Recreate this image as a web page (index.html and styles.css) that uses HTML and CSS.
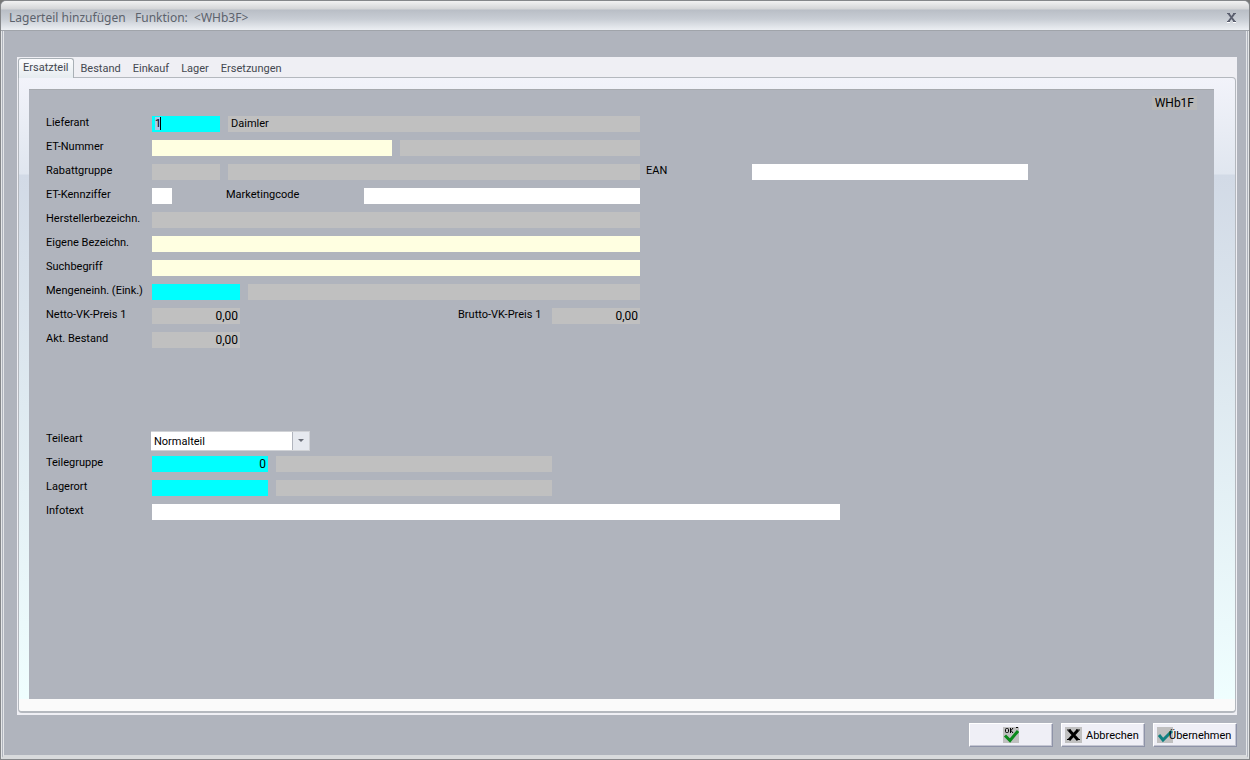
FILE: index.html
```html
<!DOCTYPE html>
<html lang="de">
<head>
    <meta charset="UTF-8">
    <meta name="viewport" content="width=device-width, initial-scale=1.0">
    <title>Lagerteil hinzufügen</title>
    <link rel="stylesheet" href="styles.css">
</head>
<body>
    <div class="fenster">
        <header class="titelleiste">
            <h1>Lagerteil hinzufügen &nbsp; Funktion: &nbsp;&lt;WHb3F&gt;</h1>
            <button type="button" class="schliessen" aria-label="Schließen">
                <svg width="11" height="11" viewBox="0 0 11 11">
                    <path d="M1 10.5h3M7 10.5h3" stroke="#fff"/>
                    <path d="M2.5 1.5l6 8M8.5 1.5l-6 8" stroke="#5c6070" stroke-width="2"/>
                    <path d="M1 1.5h3M7 1.5h3M1 9.5h3M7 9.5h3" stroke="#5c6070"/>
                </svg>
            </button>
        </header>

        <main class="inhalt">
            <div class="register">
                <nav class="reiter">
                    <button type="button" class="aktiv">Ersatzteil</button>
                    <button type="button">Bestand</button>
                    <button type="button">Einkauf</button>
                    <button type="button">Lager</button>
                    <button type="button">Ersetzungen</button>
                </nav>

                <div class="blatt">
                    <form id="ersatzteil" class="maske">
                        <div class="maskenkopf"><span class="code">WHb1F</span></div>

                        <!-- Stammdaten -->
                        <div class="zeile">
                            <label for="lieferant">Lieferant</label>
                            <input type="text" id="lieferant" class="schluessel markiert w-68" value="1">
                            <input type="text" class="anzeige w-412" value="Daimler" aria-label="Lieferantenname" readonly>
                        </div>
                        <div class="zeile">
                            <label for="etNummer">ET-Nummer</label>
                            <input type="text" id="etNummer" class="pflicht w-240">
                            <input type="text" class="anzeige w-240" aria-label="ET-Nummer Zusatz" readonly>
                        </div>
                        <div class="zeile">
                            <label for="rabattgruppe">Rabattgruppe</label>
                            <input type="text" id="rabattgruppe" class="anzeige w-68" readonly>
                            <input type="text" class="anzeige w-412" aria-label="Rabattgruppe Text" readonly>
                            <label for="ean" class="ean">EAN</label>
                            <input type="text" id="ean" class="w-276">
                        </div>
                        <div class="zeile">
                            <label for="kennziffer">ET-Kennziffer</label>
                            <input type="text" id="kennziffer" class="w-20">
                            <label for="marketingcode" class="marketing">Marketingcode</label>
                            <input type="text" id="marketingcode" class="w-276">
                        </div>
                        <div class="zeile">
                            <label for="hersteller">Herstellerbezeichn.</label>
                            <input type="text" id="hersteller" class="anzeige w-488" readonly>
                        </div>
                        <div class="zeile">
                            <label for="eigene">Eigene Bezeichn.</label>
                            <input type="text" id="eigene" class="pflicht w-488">
                        </div>
                        <div class="zeile">
                            <label for="suchbegriff">Suchbegriff</label>
                            <input type="text" id="suchbegriff" class="pflicht w-488">
                        </div>
                        <div class="zeile">
                            <label for="mengeneinheit">Mengeneinh. (Eink.)</label>
                            <input type="text" id="mengeneinheit" class="schluessel w-88">
                            <input type="text" class="anzeige w-392" aria-label="Mengeneinheit Text" readonly>
                        </div>
                        <div class="zeile">
                            <label for="netto">Netto-VK-Preis 1</label>
                            <input type="text" id="netto" class="anzeige zahl w-88" value="0,00" readonly>
                            <label for="brutto" class="brutto">Brutto-VK-Preis 1</label>
                            <input type="text" id="brutto" class="anzeige zahl w-88" value="0,00" readonly>
                        </div>
                        <div class="zeile">
                            <label for="bestand">Akt. Bestand</label>
                            <input type="text" id="bestand" class="anzeige zahl w-88" value="0,00" readonly>
                        </div>

                        <!-- Zuordnung -->
                        <div class="zeile abstand">
                            <label for="teileart">Teileart</label>
                            <div class="auswahl">
                                <select id="teileart">
                                    <option>Normalteil</option>
                                </select>
                            </div>
                        </div>
                        <div class="zeile">
                            <label for="teilegruppe">Teilegruppe</label>
                            <input type="text" id="teilegruppe" class="schluessel zahl w-116" value="0">
                            <input type="text" class="anzeige w-276" aria-label="Teilegruppe Text" readonly>
                        </div>
                        <div class="zeile">
                            <label for="lagerort">Lagerort</label>
                            <input type="text" id="lagerort" class="schluessel w-116">
                            <input type="text" class="anzeige w-276" aria-label="Lagerort Text" readonly>
                        </div>
                        <div class="zeile">
                            <label for="infotext">Infotext</label>
                            <input type="text" id="infotext" class="w-688">
                        </div>
                    </form>
                </div>
            </div>

            <footer class="knoepfe">
                <button type="submit" form="ersatzteil" class="ok">
                    <svg width="16" height="16" viewBox="0 0 16 16" role="img" aria-label="OK">
                        <rect width="16" height="16" fill="#c0c0c0"/>
                        <path d="M2 8.500l5 5L15 4" fill="none" stroke="#0a8a1a" stroke-width="3"/>
                        <rect x="2.500" y="1.500" width="3" height="4" rx="1" fill="none" stroke="#000"/>
                        <path d="M7.500 1v5M10 1L8 3.500 10 6M13 .500h2" fill="none" stroke="#000"/>
                    </svg>
                </button>
                <button type="button">
                    <svg width="17" height="16" viewBox="0 0 17 16">
                        <rect width="17" height="16" fill="#c0c0c0"/>
                        <path d="M4 3l9 10M13 3L4 13" stroke="#000" stroke-width="3"/>
                        <path d="M2 3h4M11 3h4M2 12.500h4M11 12.500h4" stroke="#000"/>
                    </svg>
                    <span>Abbrechen</span>
                </button>
                <button type="button" class="uebernehmen">
                    <svg width="16" height="16" viewBox="0 0 16 16">
                        <rect width="16" height="16" fill="#c0c0c0"/>
                        <path d="M2 8l4 5 9-9" fill="none" stroke="#108080" stroke-width="3"/>
                    </svg>
                    <span>Übernehmen</span>
                </button>
            </footer>
        </main>
    </div>
</body>
</html>
```
FILE: styles.css
```css
* {
    box-sizing: border-box;
}

body {
    margin: 0;
    background-color: #777;
    font-family: Roboto, sans-serif;
    font-size: 11px;
    color: #000;
}

button,
input,
select {
    font: inherit;
    color: inherit;
    border-radius: 0;
}

/* Fensterrahmen */
.fenster {
    display: flex;
    flex-direction: column;
    min-height: 100vh;
    border: 1px solid #85878a;
    border-radius: 6px 6px 0 0;
    background-color: #b0b4bd;
    overflow: hidden;
}

.titelleiste {
    display: flex;
    align-items: center;
    justify-content: space-between;
    height: 30px;
    padding: 4px 12px 0 8px;
    border-bottom: 1px solid #a0a4aa;
    background: linear-gradient(#f2f2f2 0, #d4d5d7 8px, #b9bec6 9px, #c8cdd4 18px, #eceff3 29px);
}

.titelleiste h1 {
    margin: 0;
    font-family: "Noto Sans", sans-serif;
    font-size: 12px;
    font-weight: normal;
    color: #5c626c;
}

.schliessen {
    display: flex;
    margin: 0 -2px 0 0;
    padding: 2px;
    border: none;
    background: none;
}

.inhalt {
    display: flex;
    flex-direction: column;
    flex: 1;
    padding: 26px 9px 8px 13px;
    border: 3px double #e4e6e8;
    border-top: none;
    border-bottom: 4px solid #d8dadc;
}

/* Karteireiter */
.register {
    display: flex;
    flex-direction: column;
    flex: 1;
    padding: 0 1px 2px;
    background-color: #efeff4;
}

.reiter {
    display: flex;
    height: 20px;
    padding-top: 1px;
}

.reiter button {
    padding: 3px 6px 0;
    border: none;
    background: none;
    color: #444850;
    line-height: 16px;
}

.reiter .aktiv {
    position: relative;
    height: 20px;
    padding: 0 5px 2px 4px;
    border: 1px solid #a9b0b6;
    border-bottom: none;
    border-radius: 3px 3px 0 0;
    background: linear-gradient(#fbfbfd, #e6ecf0);
}

.blatt {
    display: flex;
    flex: 1;
    padding: 11px 21px 12px 10px;
    border: 1px solid #b4b8be;
    border-bottom-width: 2px;
    border-radius: 0 4px 4px 4px;
    background: linear-gradient(#fafafa, #fafafa) bottom / 100% 12px no-repeat,
        linear-gradient(#f2f3fa 0, #e0e6ef 96px, #d2dae6 97px, #f0ffff 100%);
}

/* Eingabemaske */
.maske {
    flex: 1;
    padding: 6px 17px;
    border-top: 1px solid #a6a9ae;
    background-color: #b0b4bd;
}

.maskenkopf {
    display: flex;
    justify-content: flex-end;
    margin-bottom: 6px;
}

.code {
    padding: 0 3px;
    background-color: #b8b8b8;
    font-size: 12px;
    line-height: 14px;
}

.zeile {
    display: flex;
    gap: 8px;
    height: 16px;
    margin-bottom: 8px;
}

.zeile.abstand {
    margin-top: 84px;
}

.zeile label {
    flex: none;
    width: 98px;
    line-height: 13px;
    white-space: nowrap;
}

.zeile .ean {
    width: 98px;
    margin-left: -2px;
}

.zeile .marketing {
    width: 130px;
    margin-left: 46px;
}

.zeile .brutto {
    width: 86px;
    margin-left: 210px;
}

.zeile input {
    height: 16px;
    padding: 0 3px;
    border: none;
    background-color: #fff;
    line-height: 16px;
}

.zeile .anzeige {
    background-color: #c0c0c0;
}

.zeile .pflicht {
    background-color: #ffffe1;
}

.zeile .schluessel {
    background-color: #0ff;
}

.zeile .zahl {
    padding: 0 2px;
    text-align: right;
    font-size: 12px;
}

/* Textmarkierung mit Einfügemarke */
.zeile .markiert {
    background-image: linear-gradient(to right, #a9c8e8 5px, #000 5px);
    background-position: 3px 1px;
    background-size: 6px 13px;
    background-repeat: no-repeat;
}

.w-20 { width: 20px; }
.w-68 { width: 68px; }
.w-88 { width: 88px; }
.w-116 { width: 116px; }
.w-240 { width: 240px; }
.w-276 { width: 276px; }
.w-392 { width: 392px; }
.w-412 { width: 412px; }
.w-488 { width: 488px; }
.w-688 { width: 688px; }

.auswahl {
    position: relative;
    width: 159px;
    height: 20px;
    margin: -1px 0 0 -1px;
}

.auswahl select {
    width: 100%;
    height: 20px;
    padding: 0 20px 0 3px;
    border: 1px solid #d0d2d6;
    border-left: none;
    appearance: none;
    background: linear-gradient(to right, #b0b4bd 1px, #e6e9ef 1px) right / 17px 100% no-repeat #fff;
}

.auswahl::after {
    content: "";
    position: absolute;
    top: 8px;
    right: 6px;
    border: 3px solid transparent;
    border-top-color: #6a6e78;
    border-bottom: none;
    pointer-events: none;
}

/* Fußleiste */
.knoepfe {
    display: flex;
    justify-content: flex-end;
    gap: 8px;
    padding-top: 8px;
}

.knoepfe button {
    display: flex;
    align-items: center;
    gap: 4px;
    width: 84px;
    height: 24px;
    padding: 0 3px;
    border: 1px solid;
    border-color: #fff #8e93a8 #8e93a8 #fff;
    background-color: #efeff6;
    box-shadow: inset -1px -1px #c4c6d2;
}

.knoepfe svg {
    flex: none;
}

.knoepfe .ok {
    justify-content: center;
}

.knoepfe .uebernehmen {
    gap: 0;
}

.knoepfe .uebernehmen span {
    margin-left: -4px;
}
```
